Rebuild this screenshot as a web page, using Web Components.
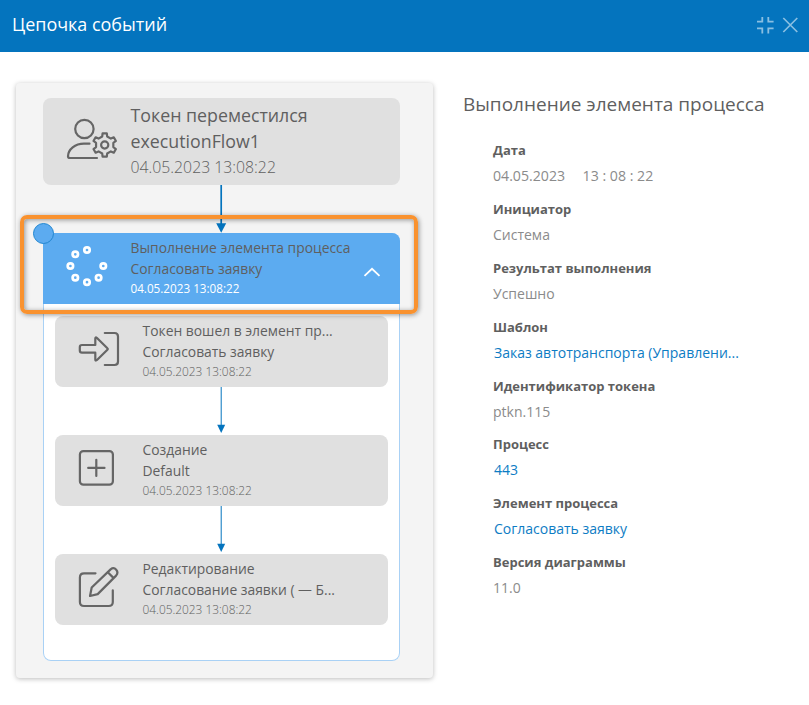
<!DOCTYPE html>
<html lang="ru">
<head>
<meta charset="utf-8">
<title>Цепочка событий</title>
<style>
html,body{margin:0;height:100%}
body{background:#fff;font-family:"Open Sans","Noto Sans",sans-serif;color:#5f5f5f;overflow:hidden}
</style>
</head>
<body>
<event-chain-dialog></event-chain-dialog>
<script>
const define = (name, html, setup) => customElements.define(name, class extends HTMLElement {
  connectedCallback() {
    if (this.shadowRoot) return;
    const root = this.attachShadow({ mode: 'open' });
    const t = document.createElement('template');
    t.innerHTML = html;
    root.append(t.content.cloneNode(true));
    if (setup) setup(this, root);
  }
});

// Outline of a gear with rounded teeth.
function gearPath(cx, cy, outer, inner, teeth) {
  const pts = [];
  const step = Math.PI * 2 / teeth;
  for (let i = 0; i < teeth; i++) {
    const a = -Math.PI / 2 + i * step;
    for (const [d, r] of [[-.27, inner], [-.17, outer], [.17, outer], [.27, inner]])
      pts.push([(cx + r * Math.cos(a + d * step)).toFixed(2), (cy + r * Math.sin(a + d * step)).toFixed(2)].join(' '));
  }
  return 'M' + pts.join('L') + 'Z';
}

const icons = {
  user: ['43 98 87.5 87', `<circle cx="84.4" cy="129" r="9.2"/><path d="M89.5 143.7H84C75 143.7 68.2 149.5 68 156.2Q68 158 70 158H97"/><path d="${gearPath(104.7, 145, 11.9, 8.9, 6)}"/><circle cx="104.7" cy="145" r="3.6"/>`],
  spinner: ['43 233 87.5 71', [[87,250],[75.3,254.3],[70.4,266],[75.3,277.7],[87,282.2],[98.6,277.7],[103.3,266]].map(([x, y]) => `<circle cx="${x}" cy="${y}" r="2.7" stroke="#fff" stroke-width="2.7"/>`).join('')],
  enter: ['55 316 87.5 71', `<path d="M104.8 333H114.5Q118 333 118 336.5V361.5Q118 365 114.5 365H104.8"/><path d="M82 345H95.3V338.6Q95.3 336.6 97 338L107.4 348.3Q108.2 349 107.4 349.8L97 360Q95.3 361.4 95.3 359.4V352.7H82Q79.8 352.7 79.8 350.5V347.2Q79.8 345 82 345Z"/>`],
  plus: ['55 435 87.5 71', `<rect x="79.9" y="451.1" width="33" height="33.6" rx="3.5"/><path d="M88.2 467.9H104.5M96.3 459.8V476"/>`],
  edit: ['55 554 87.5 71', `<path d="M95.5 573.3H84Q79.9 573.3 79.9 577.4V602Q79.9 606 84 606H108.7Q112.8 606 112.8 602V590.3"/><path d="M90 596L91.7 587.5L110.6 569.4C114.8 566 119.5 571.6 116.1 575.6L97.7 594.1L90 596ZM107.8 572.2L113.7 578.1"/>`]
};

define('line-icon', `<style>
:host{display:block;flex:none;height:100%}
svg{display:block;fill:none;stroke:#666;stroke-width:2.2;stroke-linecap:round;stroke-linejoin:round}
</style>`, (el, root) => {
  const [box, body] = icons[el.getAttribute('name')];
  const [, , w, h] = box.split(' ');
  root.innerHTML += `<svg viewBox="${box}" width="${w}" height="${h}">${body}</svg>`;
});

define('flow-arrow', `<style>
:host{display:flex;justify-content:center;height:48px}
svg{display:block}
.bold{display:none}
:host([bold]) .bold{display:block}
:host([bold]) .thin{display:none}
</style>
<svg class="thin" width="12" height="48"><path d="M6.2 0V40" stroke="#0474be"/><path d="M2.2 37.8H10.2L6.2 46Z" fill="#0474be"/></svg>
<svg class="bold" width="12" height="48"><path d="M6.2 0V40" stroke="#0474be" stroke-width="1.7"/><path d="M1.2 38.3H11.2L6.2 47.7Z" fill="#0474be"/></svg>`);

define('event-card', `<style>
:host{display:flex;height:71px;border-radius:8px;background:#e0e0e0;font-size:13.87px;line-height:21.3px}
.text{flex:1;min-width:0;white-space:nowrap;padding-top:3.6px}
.date{font-size:11.88px;line-height:18px;font-weight:300}
:host([large]){height:87px;font-size:17.8px;line-height:26px}
:host([large]) .date{font-size:15.8px;line-height:26px}
:host([active]){background:#5cabf0;border-radius:0 8px 0 0}
:host([active]) .date{color:#fff;font-weight:400;font-size:11.7px}
</style>
<div class="text"><div><slot name="title"></slot></div><div><slot name="name"></slot></div><div class="date"><slot name="date"></slot></div></div>
<slot></slot>`, (el, root) => {
  const icon = document.createElement('line-icon');
  icon.setAttribute('name', el.getAttribute('icon'));
  root.querySelector('.text').before(icon);
});

define('event-group', `<style>
:host{display:block;position:relative;box-sizing:border-box;height:428px;border-radius:0 8px 8px 8px;background:#fff;box-shadow:inset 0 0 0 1px #a9d1f5}
.items{padding:12px 12px 0}
.dot{position:absolute;left:-10px;top:-10px;width:19px;height:19px;border:1px solid #2186d0;border-radius:50%;background:#5cabf0}
.frame{position:absolute;left:-23px;top:-18px;width:389.5px;height:90.5px;border:4px solid #f9922f;border-radius:7px;box-shadow:1px 1px 5px #0006,inset 1px 1px 5px #0006}
</style>
<slot name="head"></slot><div class="items"><slot></slot></div><div class="frame"></div><div class="dot"></div>`);

define('chain-panel', `<style>
:host{display:block;box-sizing:border-box;width:417.4px;height:595px;padding:15px 33.8px 0 27px;background:#f4f4f4;border-radius:4px;box-shadow:0 1px 5px #0004}
</style><slot></slot>`);

define('detail-field', `<style>
:host{display:block;height:58.87px;white-space:nowrap}
.label{font-size:13px;font-weight:700;line-height:20px}
.value{font-size:14px;line-height:20px;padding-top:5.9px;color:#8b8b8b}
:host([link]) .value{color:#0d7cc4;padding-left:1px}
</style><div class="label"></div><div class="value"><slot></slot></div>`, (el, root) => {
  root.querySelector('.label').textContent = el.getAttribute('label');
});

define('dialog-header', `<style>
:host{display:flex;align-items:center;box-sizing:border-box;height:52px;padding:0 10px 3px 12px;background:#0474be;color:#fff;font-size:17.95px}
.title{flex:1;padding-bottom:1px;font-weight:500}
svg{display:block;fill:none;stroke:#8abfe2}
</style><div class="title"><slot></slot></div>
<svg width="44" height="20" viewBox="755 15 44 20"><path d="M757 21.7H762.3V17M773.6 21.7H768.3V17M757 28.3H762.3V33.5M773.6 28.3H768.3V33.5" stroke-width="1.8"/><path d="M783.3 18L797.3 32M797.3 18L783.3 32" stroke-width="1.7"/></svg>`);

define('event-chain-dialog', `<style>
:host{display:block}
main{display:flex;padding:31px 0 0 16px}
aside{padding:7px 0 0 29.6px}
h2{margin:0 0 22.2px;font-size:19px;line-height:28px;font-weight:400;white-space:nowrap}
.fields{padding-left:30px}
.datetime{font-size:14.15px}
.time{margin-left:17.5px}
.chevron{flex:none;margin:33px 17.5px 0 0}
</style>
<dialog-header>Цепочка событий</dialog-header>
<main>
<chain-panel>
  <event-card large icon="user"><span slot="title">Токен переместился</span><span slot="name">executionFlow1</span><span slot="date">04.05.2023 13:08:22</span></event-card>
  <flow-arrow bold></flow-arrow>
  <event-group>
    <event-card slot="head" active icon="spinner"><span slot="title">Выполнение элемента процесса</span><span slot="name">Согласовать заявку</span><span slot="date">04.05.2023 13:08:22</span>
      <svg class="chevron" width="20" height="12" viewBox="0 0 20 12" fill="none" stroke="#fff" stroke-width="1.8"><path d="M2.5 9.8L10 2.8L17.5 9.8"/></svg></event-card>
    <event-card icon="enter"><span slot="title">Токен вошел в элемент пр...</span><span slot="name">Согласовать заявку</span><span slot="date">04.05.2023 13:08:22</span></event-card>
    <flow-arrow></flow-arrow>
    <event-card icon="plus"><span slot="title">Создание</span><span slot="name">Default</span><span slot="date">04.05.2023 13:08:22</span></event-card>
    <flow-arrow></flow-arrow>
    <event-card icon="edit"><span slot="title">Редактирование</span><span slot="name">Согласование заявки ( — Б...</span><span slot="date">04.05.2023 13:08:22</span></event-card>
  </event-group>
</chain-panel>
<aside>
  <h2>Выполнение элемента процесса</h2>
  <div class="fields">
    <detail-field label="Дата"><span class="datetime">04.05.2023<span class="time">13 : 08 : 22</span></span></detail-field>
    <detail-field label="Инициатор">Система</detail-field>
    <detail-field label="Результат выполнения">Успешно</detail-field>
    <detail-field label="Шаблон" link>Заказ автотранспорта (Управлени...</detail-field>
    <detail-field label="Идентификатор токена">ptkn.115</detail-field>
    <detail-field label="Процесс" link>443</detail-field>
    <detail-field label="Элемент процесса" link>Согласовать заявку</detail-field>
    <detail-field label="Версия диаграммы">11.0</detail-field>
  </div>
</aside>
</main>`);
</script>
</body>
</html>
